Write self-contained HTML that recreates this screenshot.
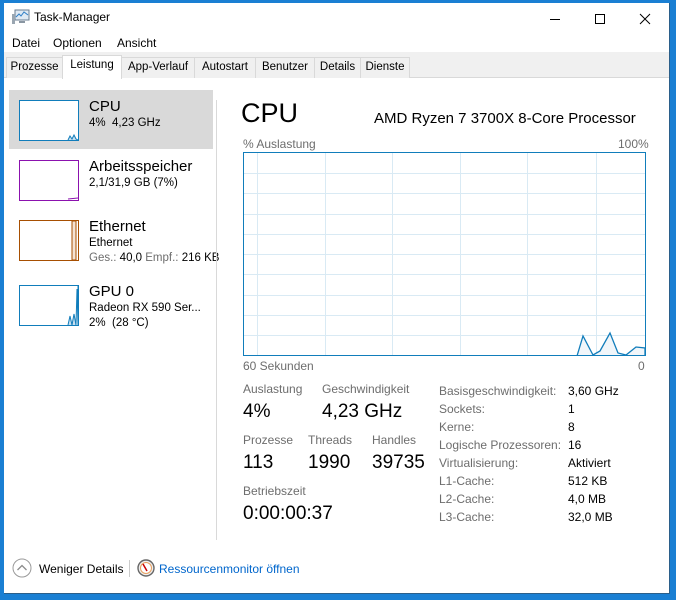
<!DOCTYPE html>
<html><head><meta charset="utf-8">
<style>
*{margin:0;padding:0;box-sizing:border-box}
body{width:676px;height:600px;background:#1a7fd3;font-family:"Liberation Sans",sans-serif;position:relative;overflow:hidden;color:#000}
.win{position:absolute;left:4px;top:3px;width:666px;height:591px;background:#fff;border:1px solid #2b5f8a;border-top:none;border-left:none}
.a{position:absolute;white-space:nowrap}
.g{color:#6d6d6d}
.tabs{position:absolute;left:0;top:49px;width:665px;height:26px;background:#f0f0f0;border-bottom:1px solid #d9d9d9}
.tab{position:absolute;top:5px;height:21px;border:1px solid #d9d9d9;border-bottom:none;font-size:11.5px;line-height:19px;text-align:center;background:#f0f0f0}
.tab.act{top:3px;height:24px;background:#fff;border-color:#d9d9d9;z-index:2}
.thumb{position:absolute;width:60px;height:41px;border:1px solid;background:#fff}
.sb1{font-size:15px}.sb2{font-size:11.5px}
.lbl{font-size:12px;color:#6d6d6d}
.big{font-size:19px}
</style></head><body>
<div class="win">
 <svg class="a" style="left:8px;top:6px" width="18" height="16" viewBox="0 0 18 16"><rect x="3" y="1" width="14" height="10" fill="#dfe9f3" stroke="#6a7d90"/><polyline points="4,8 7,5 9,7 12,3 16,6" fill="none" stroke="#2f7fc6" stroke-width="1"/><rect x="0" y="5" width="3" height="10" fill="#9aa6b1"/><rect x="7" y="12" width="6" height="2" fill="#8a96a2"/></svg>
 <div class="a" style="left:30px;top:7px;font-size:12px">Task-Manager</div>
 <svg class="a" style="left:546px;top:9px" width="110" height="14"><line x1="0" y1="7.5" x2="10" y2="7.5" stroke="#000"/><rect x="45.5" y="2.5" width="9" height="9" fill="none" stroke="#000"/><path d="M90 2L100 12M100 2L90 12" stroke="#000"/></svg>
 <div class="a" style="left:8px;top:33px;font-size:12px">Datei</div>
 <div class="a" style="left:49px;top:33px;font-size:12px">Optionen</div>
 <div class="a" style="left:113px;top:33px;font-size:12px">Ansicht</div>
 <div class="tabs">
  <div class="tab" style="left:2px;width:57px">Prozesse</div>
  <div class="tab act" style="left:58px;width:60px">Leistung</div>
  <div class="tab" style="left:117px;width:74px">App-Verlauf</div>
  <div class="tab" style="left:190px;width:62px">Autostart</div>
  <div class="tab" style="left:251px;width:60px">Benutzer</div>
  <div class="tab" style="left:310px;width:47px">Details</div>
  <div class="tab" style="left:356px;width:50px">Dienste</div>
 </div>
 <div class="a" style="left:5px;top:87px;width:204px;height:59px;background:#d9d9d9"></div>
 <div class="thumb" style="left:15px;top:97px;border-color:#117dbb"><svg width="58" height="39"><polyline points="48,39 50,35 52,38 54,34 56,38 58,39" fill="#c7dff0" stroke="#117dbb"/></svg></div>
 <div class="a sb1" style="left:85px;top:95px">CPU</div>
 <div class="a sb2" style="left:85px;top:114px">4%&nbsp; 4,23 GHz</div>
 <div class="thumb" style="left:15px;top:157px;border-color:#8b12ae"><svg width="58" height="39"><line x1="48" y1="38" x2="58" y2="37" stroke="#8b12ae"/></svg></div>
 <div class="a sb1" style="left:85px;top:155px">Arbeitsspeicher</div>
 <div class="a sb2" style="left:85px;top:174px">2,1/31,9 GB (7%)</div>
 <div class="thumb" style="left:15px;top:217px;border-color:#a74f01"><svg width="58" height="39"><rect x="52" y="0" width="4" height="39" fill="#f4e3d4" stroke="#a74f01" stroke-width="1"/></svg></div>
 <div class="a sb1" style="left:85px;top:215px">Ethernet</div>
 <div class="a sb2" style="left:85px;top:234px">Ethernet</div>
 <div class="a sb2" style="left:85px;top:249px"><span class="g">Ges.:</span> 40,0 <span class="g">Empf.:</span> 216 KB</div>
 <div class="thumb" style="left:15px;top:282px;border-color:#117dbb"><svg width="58" height="39"><polyline points="48,39 50,30 52,39 54,28 56,39" fill="#c7dff0" stroke="#117dbb"/><line x1="58" y1="0" x2="58" y2="39" stroke="#117dbb"/><polyline points="56,39 57,3 58,39" fill="none" stroke="#117dbb"/></svg></div>
 <div class="a sb1" style="left:85px;top:280px">GPU 0</div>
 <div class="a sb2" style="left:85px;top:299px">Radeon RX 590 Ser...</div>
 <div class="a sb2" style="left:85px;top:314px">2%&nbsp; (28 °C)</div>
 <div class="a" style="left:212px;top:97px;width:1px;height:440px;background:#d9d9d9"></div>
 <div class="a" style="left:237px;top:95px;font-size:27px">CPU</div>
 <div class="a" style="left:370px;top:107px;font-size:15px">AMD Ryzen 7 3700X 8-Core Processor</div>
 <div class="a lbl" style="left:239px;top:134px">% Auslastung</div>
 <div class="a lbl" style="left:614px;top:134px">100%</div>
 <svg class="a" style="left:239px;top:149px" width="403" height="204" viewBox="0 0 403 204">
  <g stroke="#d9eaf4" stroke-width="1">
   <line x1="14.5" y1="0" x2="14.5" y2="204"/><line x1="82.5" y1="0" x2="82.5" y2="204"/><line x1="149.5" y1="0" x2="149.5" y2="204"/><line x1="217.5" y1="0" x2="217.5" y2="204"/><line x1="284.5" y1="0" x2="284.5" y2="204"/><line x1="353.5" y1="0" x2="353.5" y2="204"/>
   <line x1="0" y1="21.5" x2="403" y2="21.5"/><line x1="0" y1="41.5" x2="403" y2="41.5"/><line x1="0" y1="62.5" x2="403" y2="62.5"/><line x1="0" y1="82.5" x2="403" y2="82.5"/><line x1="0" y1="102.5" x2="403" y2="102.5"/><line x1="0" y1="122.5" x2="403" y2="122.5"/><line x1="0" y1="143.5" x2="403" y2="143.5"/><line x1="0" y1="163.5" x2="403" y2="163.5"/><line x1="0" y1="183.5" x2="403" y2="183.5"/>
  </g>
  <polyline points="334,204 340,184 350,203 357,199 367,181 375,201 383,203 393,195 402,196 402,204" fill="#f1f6fa" stroke="#117dbb" stroke-width="1.3"/>
  <rect x="0.5" y="0.5" width="402" height="203" fill="none" stroke="#117dbb"/>
 </svg>
 <div class="a lbl" style="left:239px;top:356px">60 Sekunden</div>
 <div class="a lbl" style="left:634px;top:356px">0</div>
 <div class="a lbl" style="left:239px;top:379px">Auslastung</div>
 <div class="a lbl" style="left:318px;top:379px">Geschwindigkeit</div>
 <div class="a big" style="left:239px;top:398px">4%</div>
 <div class="a big" style="left:318px;top:398px">4,23 GHz</div>
 <div class="a lbl" style="left:239px;top:430px">Prozesse</div>
 <div class="a lbl" style="left:304px;top:430px">Threads</div>
 <div class="a lbl" style="left:368px;top:430px">Handles</div>
 <div class="a big" style="left:239px;top:449px">113</div>
 <div class="a big" style="left:304px;top:449px">1990</div>
 <div class="a big" style="left:368px;top:449px">39735</div>
 <div class="a lbl" style="left:239px;top:481px">Betriebszeit</div>
 <div class="a big" style="left:239px;top:500px">0:00:00:37</div>
 <div class="a lbl" style="left:435px;top:379px;line-height:18px">Basisgeschwindigkeit:<br>Sockets:<br>Kerne:<br>Logische Prozessoren:<br>Virtualisierung:<br>L1-Cache:<br>L2-Cache:<br>L3-Cache:</div>
 <div class="a" style="left:564px;top:379px;line-height:18px;font-size:12px">3,60 GHz<br>1<br>8<br>16<br>Aktiviert<br>512 KB<br>4,0 MB<br>32,0 MB</div>
 <svg class="a" style="left:8px;top:555px" width="20" height="20"><circle cx="10" cy="10" r="9" fill="#fff" stroke="#9a9a9a"/><polyline points="5.5,12 10,7.5 14.5,12" fill="none" stroke="#8a8a8a" stroke-width="1.3"/></svg>
 <div class="a" style="left:35px;top:559px;font-size:12px">Weniger Details</div>
 <div class="a" style="left:125px;top:557px;width:1px;height:17px;background:#ccc"></div>
 <svg class="a" style="left:133px;top:556px" width="18" height="18"><circle cx="9" cy="9" r="8" fill="#eee" stroke="#666" stroke-width="1.4"/><circle cx="9" cy="9" r="5.5" fill="#fff" stroke="#e8a060"/><line x1="6" y1="5" x2="10" y2="12" stroke="#c00" stroke-width="1.5"/></svg>
 <div class="a" style="left:155px;top:559px;font-size:12px;color:#0066cc">Ressourcenmonitor öffnen</div>
</div>
</body></html>
